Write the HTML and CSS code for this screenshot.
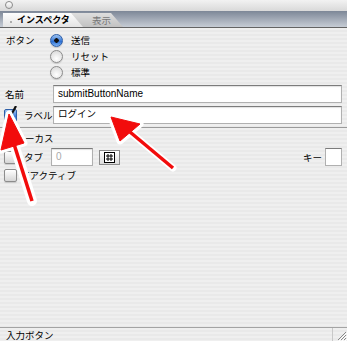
FILE: index.html
```html
<!DOCTYPE html>
<html lang="ja">
<head>
    <meta charset="UTF-8">
    <title>インスペクタ</title>
    <link rel="stylesheet" href="styles.css">
</head>
<body>
    <div class="window">
        <div class="titlebar"><span class="close"></span></div>

        <div class="tabs">
            <div class="tab active"><span class="tab-dot"></span>インスペクタ</div>
            <div class="tab">表示</div>
        </div>

        <div class="panel">
            <div class="row row-button">
                <div class="label">ボタン</div>
                <div class="radios">
                    <div class="radio-row"><span class="radio on"></span>送信</div>
                    <div class="radio-row"><span class="radio"></span>リセット</div>
                    <div class="radio-row"><span class="radio"></span>標準</div>
                </div>
            </div>

            <div class="row row-field">
                <div class="label">名前</div>
                <div class="text-field latin">submitButtonName</div>
            </div>

            <div class="row row-field row-label">
                <div class="label check-label"><span class="checkbox checked">
                    <svg width="13" height="14" viewBox="0 0 13 14"><path d="M2 7 L5 11 L11 0" fill="none" stroke="#111" stroke-width="2.2"/></svg>
                </span>ラベル</div>
                <div class="text-field text-area">ログイン</div>
            </div>

            <div class="divider"></div>

            <div class="section-title">フォーカス</div>

            <div class="row row-focus">
                <span class="checkbox"></span>
                <span class="check-text">タブ</span>
                <div class="text-field small latin muted">0</div>
                <div class="icon-button">
                    <svg width="11" height="11" viewBox="0 0 11 11">
                        <rect x="0.5" y="0.5" width="10" height="10" fill="#fff" stroke="#000"/>
                        <path d="M4 2 V9 M7 2 V9 M2 4 H9 M2 7 H9" stroke="#000" stroke-width="1"/>
                    </svg>
                </div>
                <span class="spacer"></span>
                <span class="key-text">キー</span>
                <div class="key-box"></div>
            </div>

            <div class="row row-check">
                <span class="checkbox"></span>
                <span class="check-text">非アクティブ</span>
            </div>
        </div>

        <div class="status">
            <span class="status-text">入力ボタン</span>
            <span class="grip">
                <svg width="12" height="12" viewBox="0 0 12 12">
                    <path d="M11 3 L3 11 M11 6 L6 11 M11 9 L9 11" stroke="#888" stroke-width="1"/>
                    <path d="M12 4 L4 12 M12 7 L7 12 M12 10 L10 12" stroke="#fff" stroke-width="1"/>
                </svg>
            </span>
        </div>

        <!-- 注釈の矢印 -->
        <svg class="arrows" width="347" height="341" viewBox="0 0 347 341">
            <g fill="#fff" stroke="#fff" stroke-linejoin="round" stroke-linecap="round">
                <line x1="14" y1="144" x2="32" y2="201" stroke-width="10"/>
                <polygon points="9,114 1,150 24,143" stroke-width="7"/>
                <line x1="130" y1="132" x2="173" y2="168" stroke-width="7"/>
                <polygon points="111,117 120,141 140,124" stroke-width="7"/>
            </g>
            <g fill="#f20c0c" stroke="#f20c0c" stroke-width="1" stroke-linejoin="round">
                <line x1="14" y1="144" x2="32" y2="201" stroke-width="3.5"/>
                <polygon points="9,114 1,150 24,143"/>
                <line x1="130" y1="132" x2="173" y2="168" stroke-width="3.5"/>
                <polygon points="111,117 120,141 140,124"/>
            </g>
        </svg>
    </div>
</body>
</html>
```

FILE: styles.css
```css
body {
    margin: 0;
    font-family: "Noto Sans CJK JP", sans-serif;
    font-size: 9.5px;
    color: #000;
}

.window {
    position: relative;
    display: flex;
    flex-direction: column;
    width: 347px;
    height: 341px;
    overflow: hidden;
    background: repeating-linear-gradient(to bottom, #efefef 0 2px, #e9e9e9 2px 4px);
}

/* タイトルバー */
.titlebar {
    height: 11px;
    background: linear-gradient(#f2f2f2, #d9d9d9);
}

.close {
    display: block;
    width: 6px;
    height: 6px;
    margin: 1px 0 0 5px;
    border: 1px solid #8a8a8a;
    border-radius: 50%;
    background: linear-gradient(#fff, #ddd);
}

/* タブ */
.tabs {
    display: flex;
    align-items: flex-end;
    height: 16px;
    padding-left: 3px;
    background: linear-gradient(#7d8797, #c6ccd5);
    border-bottom: 1px solid #646464;
}

.tab {
    height: 14px;
    line-height: 14px;
    white-space: nowrap;
}

.tab.active {
    position: relative;
    z-index: 1;
    width: 80px;
    padding-left: 14px;
    box-sizing: border-box;
    font-size: 9px;
    font-weight: bold;
    background: linear-gradient(#fdfdfd, #e4e4e4);
    clip-path: polygon(0 0, 68px 0, 100% 100%, 0 100%);
}

.tab-dot {
    position: absolute;
    left: 7px;
    top: 8px;
    width: 2px;
    height: 2px;
    border-radius: 50%;
    background: #999;
}

.tab:not(.active) {
    width: 52px;
    margin-left: -12px;
    padding-left: 21px;
    box-sizing: border-box;
    color: #777;
    background: linear-gradient(#dedede, #c2c2c2);
    clip-path: polygon(0 0, 40px 0, 100% 100%, 0 100%);
}

/* パネル */
.panel {
    flex: 1;
    display: flex;
    flex-direction: column;
    padding: 4px 5px 0 5px;
}

.row {
    display: flex;
    align-items: center;
    white-space: nowrap;
}

.label {
    width: 48px;
    flex: none;
}

.row-button {
    align-items: flex-start;
}

.row-button .label {
    width: 44px;
    padding-left: 1px;
    line-height: 16px;
}

.radio-row {
    display: flex;
    align-items: center;
    gap: 8px;
    height: 16px;
}

.radio {
    width: 11px;
    height: 11px;
    border: 1px solid #8c8c8c;
    border-radius: 50%;
    background: radial-gradient(circle at 50% 70%, #fff, #d4d4d4);
    box-shadow: 0 1px 1px rgba(0, 0, 0, 0.15);
}

.radio.on {
    border-color: #2f5fa8;
    background: radial-gradient(circle, #111 0 2px, transparent 2.5px),
                linear-gradient(#9cc3f0, #2f72d6 60%, #7fb4f2);
}

.row-field {
    margin-top: 5px;
}

.row-label {
    margin-top: 3px;
}

.text-field {
    flex: 1;
    height: 18px;
    box-sizing: border-box;
    padding: 0 4px;
    line-height: 16px;
    background: #fff;
    border: 1px solid #b0b0b0;
    border-top-color: #7c7c7c;
    box-shadow: inset 0 1px 1px rgba(0, 0, 0, 0.12);
}

.text-area {
    line-height: 12px;
}

.latin {
    font-family: "Liberation Sans", sans-serif;
    font-size: 10px;
}

.check-label {
    display: flex;
    align-items: center;
    gap: 7px;
    margin-left: -1px;
    width: 49px;
}

.checkbox {
    position: relative;
    flex: none;
    width: 11px;
    height: 11px;
    border: 1px solid #8c8c8c;
    border-radius: 2px;
    background: linear-gradient(#fff, #d6d6d6);
    box-shadow: 0 1px 1px rgba(0, 0, 0, 0.15);
}

.checkbox.checked {
    border-color: #2f5fa8;
    background: linear-gradient(#a6c9f2, #3577d8 60%, #86b8f0);
}

.checkbox svg {
    position: absolute;
    left: 0;
    top: -4px;
}

.divider {
    height: 1px;
    margin: 3px -5px 0 -5px;
    background: #9a9a9a;
}

.section-title {
    margin-top: 4px;
    padding-left: 1px;
    line-height: 12px;
}

.row-focus {
    margin-top: 4px;
    margin-left: -1px;
}

.check-text {
    margin-left: 7px;
}

.text-field.small {
    flex: none;
    width: 42px;
    margin-left: 8px;
}

.muted {
    color: #aaa;
}

.icon-button {
    display: flex;
    align-items: center;
    justify-content: center;
    width: 21px;
    height: 15px;
    box-sizing: border-box;
    margin-left: 6px;
    border: 1px solid #8c8c8c;
    background: linear-gradient(#fff, #dcdcdc);
}

.spacer {
    flex: 1;
}

.key-text {
    margin-right: 3px;
}

.key-box {
    width: 17px;
    height: 18px;
    box-sizing: border-box;
    background: #fff;
    border: 1px solid #b0b0b0;
    border-top-color: #7c7c7c;
}

.row-check {
    margin-top: 2px;
    margin-left: -1px;
    height: 14px;
}

.row-check .check-text {
    margin-left: 3px;
}

/* ステータスバー */
.status {
    display: flex;
    align-items: center;
    height: 13px;
    border-top: 1px solid #a4a4a4;
}

.status-text {
    flex: 1;
    padding-left: 6px;
}

.grip {
    display: flex;
    align-items: flex-end;
    justify-content: flex-end;
    width: 14px;
    height: 13px;
    border-left: 1px solid #c8c8c8;
}

.arrows {
    position: absolute;
    left: 0;
    top: 0;
    pointer-events: none;
}
```
